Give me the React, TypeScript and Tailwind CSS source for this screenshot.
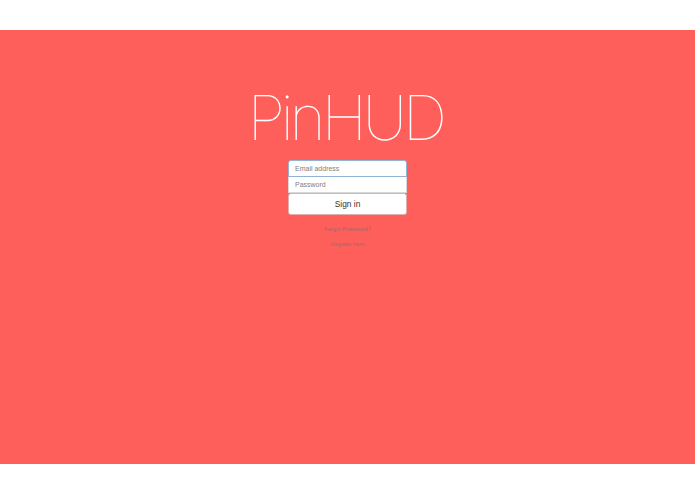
export default function App() {
  return (
    <div className="h-[494px] bg-white pt-[30px] font-['Liberation_Sans',sans-serif] [text-rendering:geometricPrecision]">
      <div className="h-[434px] bg-[#ff5f5b] flex flex-col items-center pt-[53px]">
        {/* Title */}
        <h1 className="font-['Inter',sans-serif] font-thin text-[62px] leading-[70px] tracking-[-4.4px] text-white mr-[5px]">PinHUD</h1>
        <form className="w-[119px] mt-[7px] flex flex-col">
          <input
            placeholder="Email address"
            className="h-[17px] w-full px-[6px] text-[7px] bg-white border border-[#8fb4d6] rounded-t-[3px] outline-none placeholder:text-[#808080]"
          />
          <input
            placeholder="Password"
            className="h-[16px] w-full px-[6px] text-[7px] bg-white border-x border-b border-[#d8d8d8] outline-none placeholder:text-[#808080]"
          />
          <button type="button" className="h-[22px] w-full bg-white border border-[#e0b0b0] rounded-[3px] text-[8.4px] text-[#333]">
            Sign in
          </button>
        </form>
        <a className="mt-[11px] text-[5.8px] leading-[8px] text-[#a5686a]">Forgot Password?</a>
        <a className="mt-[7px] text-[5.6px] leading-[8px] text-[#a5686a]">Register here</a>
      </div>
    </div>
  )
}
